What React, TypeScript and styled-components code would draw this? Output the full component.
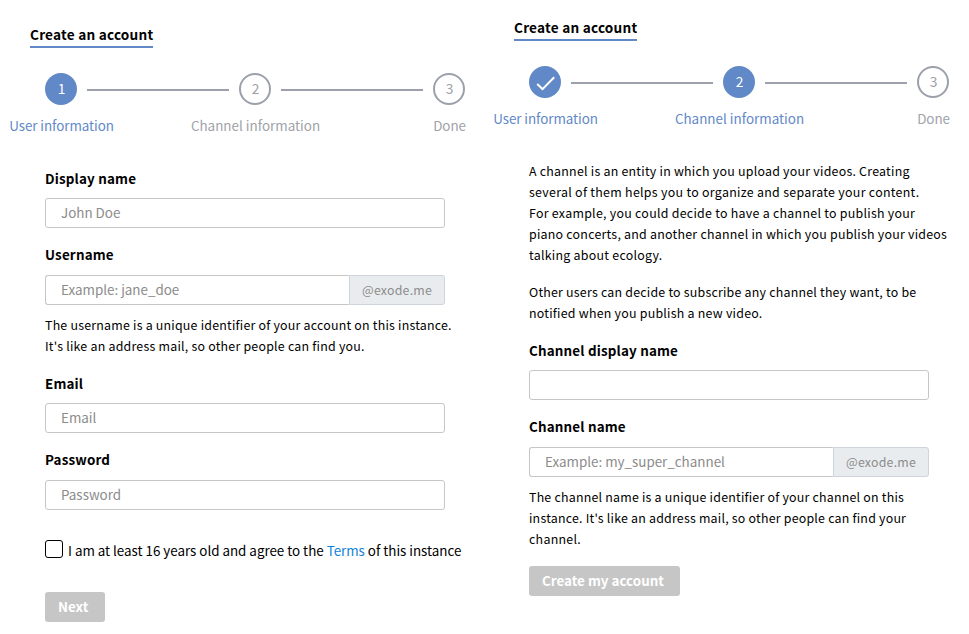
import React from 'react';
import styled, { createGlobalStyle } from 'styled-components';

const GlobalStyle = createGlobalStyle`
  *, *::before, *::after { box-sizing: border-box; }
  body {
    margin: 0;
    background: #fff;
    color: #000;
    font-family: 'Source Sans Pro', 'Noto Sans CJK SC', sans-serif;
    font-size: 13.4px;
  }
`;

const Page = styled.main`
  display: grid;
  grid-template-columns: 484px 485px;
  height: 634px;
  overflow: hidden;
`;

const Panel = styled.section<{ $top: number }>`
  display: flex;
  flex-direction: column;
  align-items: flex-start;
  padding: ${(p) => p.$top}px 20px 0 30px;
`;

const Title = styled.h1`
  margin: 0;
  width: 123px;
  height: 24px;
  line-height: 20px;
  font-size: 13.6px;
  font-weight: 700;
  letter-spacing: 0.22px;
  white-space: nowrap;
  border-bottom: 2px solid #6189c8;
`;

const Steps = styled.ol`
  display: flex;
  align-items: flex-start;
  width: 420px;
  height: 64px;
  margin: 25px 0 0 15px;
  padding: 0;
  list-style: none;
`;

const Step = styled.li`
  flex: 0 0 32px;
  width: 32px;
  min-width: 0;
  display: flex;
  flex-direction: column;
  align-items: center;
`;

const Circle = styled.span<{ $on: boolean }>`
  display: flex;
  align-items: center;
  justify-content: center;
  width: 32px;
  height: 32px;
  padding-left: 1px;
  border-radius: 50%;
  border: 2px solid ${(p) => (p.$on ? '#6189c8' : '#9ca0ab')};
  background: ${(p) => (p.$on ? '#6189c8' : '#fff')};
  color: ${(p) => (p.$on ? '#fff' : '#9ca0a6')};
`;

const StepNumber = styled.span`
  height: 20px;
  line-height: 18px;
  font-size: 13.8px;
`;

const StepLabel = styled.span<{ $on: boolean; $ls: number }>`
  margin-top: 10px;
  padding-left: 1px;
  line-height: 20px;
  letter-spacing: ${(p) => p.$ls}px;
  white-space: nowrap;
  color: ${(p) => (p.$on ? '#6189c8' : '#a0a3a8')};
`;

const Connector = styled.li`
  flex: 1;
  height: 2px;
  margin: 16px 10px 0;
  background: #9ca0ab;
`;

const Form = styled.form<{ $top: number }>`
  display: flex;
  flex-direction: column;
  align-items: flex-start;
  margin: ${(p) => p.$top}px 0 0 15px;
`;

const Label = styled.label<{ $gap: number }>`
  height: 20px;
  line-height: 18px;
  margin-bottom: ${(p) => p.$gap}px;
  font-weight: 700;
  letter-spacing: 0.18px;
  white-space: nowrap;
`;

const Group = styled.div<{ $after: number }>`
  display: flex;
  width: 400px;
  height: 30px;
  margin-bottom: ${(p) => p.$after}px;
`;

const Input = styled.input<{ $joined?: boolean }>`
  flex: 1;
  min-width: 0;
  height: 30px;
  padding: 0 15px 2px;
  border: 1px solid #c6c6c6;
  border-right-width: ${(p) => (p.$joined ? 0 : 1)}px;
  border-radius: ${(p) => (p.$joined ? '3px 0 0 3px' : '3px')};
  outline: none;
  background: #fff;
  font: inherit;
  &::placeholder { color: #8c8c8c; opacity: 1; }
`;

const Addon = styled.span`
  width: 96px;
  display: flex;
  align-items: center;
  justify-content: center;
  border: 1px solid #ced4da;
  border-radius: 0 3px 3px 0;
  background: #e9ecef;
  color: #8c8c8c;
  font-size: 12.4px;
  letter-spacing: 0.2px;
`;

const Help = styled.p<{ $after: number }>`
  margin: 0 0 ${(p) => p.$after}px;
  font-size: 12.4px;
  line-height: 21px;
  white-space: nowrap;
`;

const Line = styled.span<{ $ls?: number }>`
  display: block;
  letter-spacing: ${(p) => p.$ls ?? 0.215}px;
`;

const Agree = styled.label`
  display: flex;
  gap: 5px;
  height: 18px;
  margin-bottom: 34px;
  line-height: 20px;
  letter-spacing: -0.02px;
  white-space: nowrap;
`;

const Check = styled.input`
  appearance: none;
  width: 18px;
  height: 18px;
  margin: 0;
  border: 1px solid #000;
  border-radius: 3px;
`;

const Link = styled.a`
  color: #0f83d8;
  text-decoration: none;
`;

const Button = styled.button<{ $width: number }>`
  width: ${(p) => p.$width}px;
  height: 30px;
  padding: 0 0 2px 13px;
  border: 0;
  border-radius: 3px;
  background: #c6c6c6;
  color: #fff;
  font: inherit;
  font-weight: 700;
  line-height: 28px;
  text-align: left;
  white-space: nowrap;
`;

const steps = [
  { name: 'User information', spacing: -0.06 },
  { name: 'Channel information', spacing: 0.02 },
  { name: 'Done', spacing: -0.1 },
];

function Stepper({ current }: { current: number }) {
  return (
    <Steps>
      {steps.map(({ name, spacing }, i) => (
        <React.Fragment key={name}>
          {i > 0 && <Connector aria-hidden />}
          <Step>
            <Circle $on={i <= current}>
              {i < current ? (
                <svg width="20" height="20" viewBox="0 0 20 20" fill="none" stroke="#fff" strokeWidth="2">
                  <path d="M1.2 12.1l5.3 5L18.2 5.2" />
                </svg>
              ) : (
                <StepNumber>{i + 1}</StepNumber>
              )}
            </Circle>
            <StepLabel $on={i <= current} $ls={spacing}>{name}</StepLabel>
          </Step>
        </React.Fragment>
      ))}
    </Steps>
  );
}

export default function App() {
  return (
    <Page>
      <GlobalStyle />
      <Panel $top={24}>
        <Title>Create an account</Title>
        <Stepper current={0} />
        <Form $top={32}>
          <Label $gap={9}>Display name</Label>
          <Group $after={17}><Input placeholder="John Doe" /></Group>
          <Label $gap={10}>Username</Label>
          <Group $after={10}>
            <Input $joined placeholder="Example: jane_doe" />
            <Addon>@exode.me</Addon>
          </Group>
          <Help $after={17}>
            <Line>The username is a unique identifier of your account on this instance.</Line>
            <Line $ls={0.225}>It's like an address mail, so other people can find you.</Line>
          </Help>
          <Label $gap={9}>Email</Label>
          <Group $after={17}><Input placeholder="Email" /></Group>
          <Label $gap={10}>Password</Label>
          <Group $after={30}><Input placeholder="Password" /></Group>
          <Agree>
            <Check type="checkbox" />
            <span>I am at least 16 years old and agree to the <Link>Terms</Link> of this instance</span>
          </Agree>
          <Button type="button" $width={60}>Next</Button>
        </Form>
      </Panel>
      <Panel $top={17}>
        <Title>Create an account</Title>
        <Stepper current={1} />
        <Form $top={31}>
          <Help $after={16}>
            <Line $ls={0.235}>A channel is an entity in which you upload your videos. Creating</Line>
            <Line $ls={0.295}>several of them helps you to organize and separate your content.</Line>
            <Line $ls={0.27}>For example, you could decide to have a channel to publish your</Line>
            <Line $ls={0.24}>piano concerts, and another channel in which you publish your videos</Line>
            <Line $ls={0.27}>talking about ecology.</Line>
          </Help>
          <Help $after={17}>
            <Line $ls={0.215}>Other users can decide to subscribe any channel they want, to be</Line>
            <Line $ls={0.235}>notified when you publish a new video.</Line>
          </Help>
          <Label $gap={9}>Channel display name</Label>
          <Group $after={17}><Input /></Group>
          <Label $gap={10}>Channel name</Label>
          <Group $after={10}>
            <Input $joined placeholder="Example: my_super_channel" />
            <Addon>@exode.me</Addon>
          </Group>
          <Help $after={16}>
            <Line>The channel name is a unique identifier of your channel on this</Line>
            <Line>instance. It's like an address mail, so other people can find your</Line>
            <Line $ls={0.27}>channel.</Line>
          </Help>
          <Button type="button" $width={151}>Create my account</Button>
        </Form>
      </Panel>
    </Page>
  );
}
